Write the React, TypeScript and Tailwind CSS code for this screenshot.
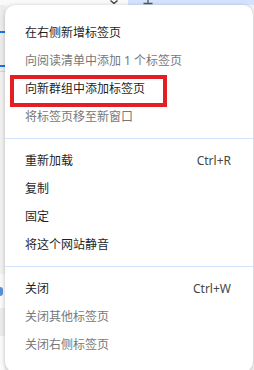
const FONT = "font-['Noto_Sans','Noto_Sans_CJK_SC',sans-serif]";

type Item = {
  label: string;
  shortcut?: string;
  dim?: boolean;
  marked?: boolean;
};

const GROUPS: Item[][] = [
  [
    { label: '在右侧新增标签页' },
    { label: '向阅读清单中添加 1 个标签页', dim: true },
    { label: '向新群组中添加标签页', marked: true },
    { label: '将标签页移至新窗口', dim: true },
  ],
  [
    { label: '重新加载', shortcut: 'Ctrl+R' },
    { label: '复制' },
    { label: '固定' },
    { label: '将这个网站静音' },
  ],
  [
    { label: '关闭', shortcut: 'Ctrl+W' },
    { label: '关闭其他标签页', dim: true },
    { label: '关闭右侧标签页', dim: true },
  ],
];

function Row({ item }: { item: Item }) {
  return (
    <div className="relative flex h-[28px] items-center justify-between pl-[20px] pr-[22px]">
      <span className={item.dim ? 'text-[#777777]' : 'text-[#1f1f1f]'}>
        {item.label}
      </span>
      {item.shortcut && <span className="text-[#444746]">{item.shortcut}</span>}
      {item.marked && (
        // annotation box drawn over the row
        <div className="pointer-events-none absolute left-[5px] top-0 h-[32px] w-[157px] border-[4px] border-[#e31e24]" />
      )}
    </div>
  );
}

export default function App() {
  return (
    <div className={`flex h-[370px] w-[254px] flex-col overflow-hidden bg-[#f3f3f3] text-[12px] ${FONT}`}>
      {/* tab strip peeking above the menu */}
      <div className="flex h-[5px] shrink-0">
        <div className="flex w-[128px] items-end justify-end bg-[#f8f9fa] pr-[10px]">
          <svg width="8" height="4" viewBox="0 0 8 4" className="mb-[1px]">
            <path d="M0.5 0.5 L4 3.5 L7.5 0.5" fill="none" stroke="#444" strokeWidth="1.4" />
          </svg>
        </div>
        <div className="flex flex-1 items-start bg-[#d3e3fd] pl-[15px]">
          <svg width="10" height="5" viewBox="0 0 10 5">
            <path d="M5 0 V4 M0.5 3.5 H9.5" fill="none" stroke="#555" strokeWidth="1.3" />
          </svg>
        </div>
      </div>

      <div className="flex min-h-0 flex-1">
        {/* page edge at the left */}
        <div className="flex w-[5px] shrink-0 flex-col">
          <div className="h-[26px] bg-[#ececec]" />
          <div className="h-[2px] bg-[#1a73e8]" />
          <div className="h-[32px] bg-[#ececec]" />
          <div className="h-[2px] bg-[#1a73e8]" />
          <div className="h-[4px] bg-[#ececec]" />
          <div className="h-px bg-[#d5d5d5]" />
          <div className="h-[202px] bg-[#f1f1f1]" />
          <div className="flex h-[34px] flex-col justify-center bg-[#fafafa]">
            <div className="h-[9px] w-[3px] rounded-r-full bg-[#5b8fd6]" />
          </div>
          <div className="h-[28px] bg-[#ececec]" />
          <div className="flex-1 bg-[#fafafa]" />
        </div>

        {/* context menu */}
        <div className="h-[367px] w-[248px] shrink-0 rounded-[10px] bg-white pt-[14px] shadow-[0_1px_4px_rgba(0,0,0,0.25)]">
          {GROUPS.map((group, gi) => (
            <div key={gi}>
              {gi > 0 && <div className="mt-[7px] mb-[8px] h-px bg-[#d3e3fd]" />}
              {group.map((item) => (
                <Row key={item.label} item={item} />
              ))}
            </div>
          ))}
        </div>
      </div>
    </div>
  );
}
